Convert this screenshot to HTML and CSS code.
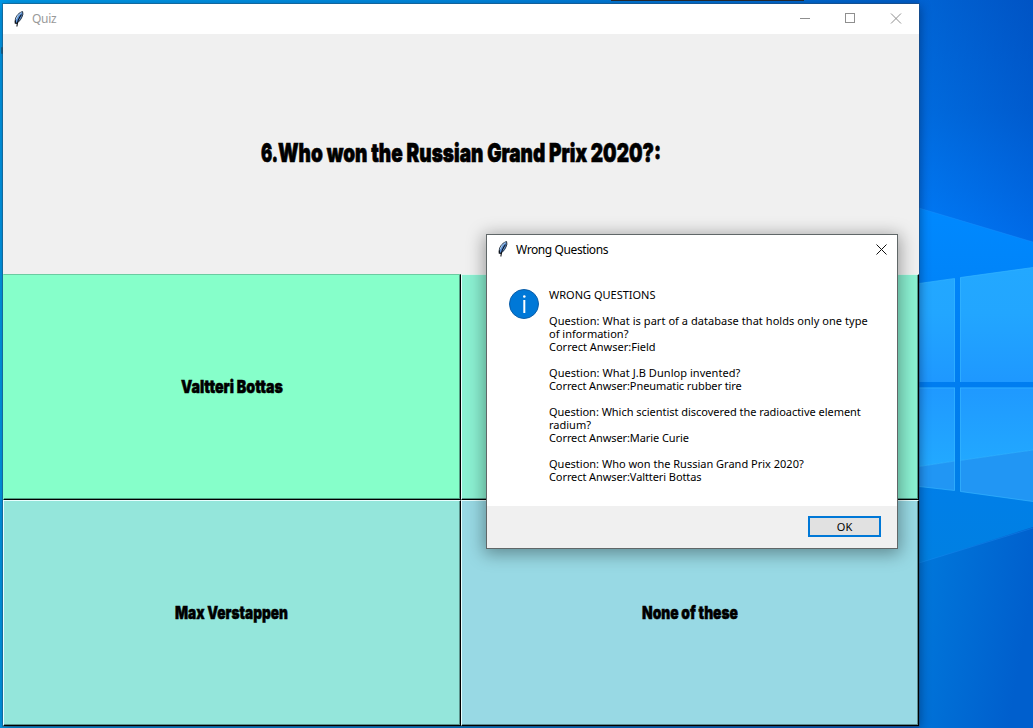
FILE: index.html
```html
<!DOCTYPE html>
<html lang="en">
<head>
<meta charset="utf-8">
<title>Quiz</title>
<link rel="stylesheet" href="styles.css">
</head>
<body>
<svg width="0" height="0" class="defs" aria-hidden="true">
  <symbol id="feather" viewBox="0 0 10 16">
    <path d="M8.6.6C5.500 1.200 2 4.800 1.400 8.400L1.300 11.500 2.500 12.200C5.500 11 8 7 8.900 3.200Z" fill="#5b93dc" stroke="#26323f" stroke-width="1"/>
    <path d="M7.400 1.500C5 3 3 5.500 2.300 8" fill="none" stroke="#b8d0e4" stroke-width="1"/>
    <path d="M7.500 3.500C5.500 6 3.300 10 2.900 15.500M1.300 9.500V12.300H4" fill="none" stroke="#0b0f16" stroke-width="1.100"/>
  </symbol>
</svg>
<div class="desktop">
  <svg class="wallpaper" width="1033" height="728" aria-hidden="true">
    <defs>
      <linearGradient id="base" x1="0" x2="1" y1="0" y2="0"><stop offset="0" stop-color="#009be9"/><stop offset=".45" stop-color="#0088df"/><stop offset=".7" stop-color="#006fd3"/><stop offset="1" stop-color="#0055c5"/></linearGradient>
      <linearGradient id="sky" x1="0" x2="0" y1="0" y2="1"><stop offset="0" stop-color="#005acb"/><stop offset=".45" stop-color="#0063d8"/><stop offset="1" stop-color="#007aff"/></linearGradient>
      <linearGradient id="shade" x1="0" x2="1" y1=".2" y2="0"><stop offset="0" stop-color="#0078e8" stop-opacity=".35"/><stop offset="1" stop-color="#0048b8" stop-opacity=".35"/></linearGradient>
      <linearGradient id="beam" x1="0" x2="0" y1="0" y2="1"><stop offset="0" stop-color="#0089ff"/><stop offset=".5" stop-color="#007df0"/><stop offset="1" stop-color="#0080e2"/></linearGradient>
      <linearGradient id="floor" x1="0" x2="1" y1="0" y2=".3"><stop offset="0" stop-color="#0079dc"/><stop offset="1" stop-color="#005fcd"/></linearGradient>
      <linearGradient id="paneTop" x1="0" x2="0" y1="0" y2="1"><stop offset="0" stop-color="#23a8ff"/><stop offset=".4" stop-color="#22a6ff"/><stop offset="1" stop-color="#1e98ff"/></linearGradient>
      <linearGradient id="paneLow" x1="0" x2="0" y1="0" y2="1"><stop offset="0" stop-color="#1f99ff"/><stop offset="1" stop-color="#22a9ff"/></linearGradient>
    </defs>
    <rect width="1033" height="728" fill="url(#base)"/>
    <rect x="919" width="114" height="250" fill="url(#sky)"/>
    <rect x="919" width="114" height="250" fill="url(#shade)"/>
    <path d="M919 560 1033 526V728H919Z" fill="url(#floor)"/>
    <path d="M919 208 1033 242V527L919 563Z" fill="url(#beam)"/>
    <path d="M919 208 1033 242M919 563 1033 528" stroke="#2599ff" stroke-opacity=".3"/>
    <path d="M919 283.500 955 278.500V382H919ZM960 277.500 1033 267.500V382H960Z" fill="url(#paneTop)"/>
    <path d="M919 387.500H955V461L919 466.500ZM960 387.500H1033V450L960 460.500Z" fill="url(#paneLow)"/>
    <path d="M919 466.500 955 461V490.500L919 486.500ZM960 460.500 1033 450V501.500L960 491.500Z" fill="#2196f4"/>
    <path d="M919 283.500 954.500 278.500V382M960.500 382V277.500L1033 267.500M954.500 388V490.500L919 486.500M960.500 388V491.500L1033 501.500M919 466.500 955 461M960 460.500 1033 450M919 388H955M960 388H1033" fill="none" stroke="#36b6ff" stroke-opacity=".65"/>
    <rect x="611" width="193" height="1" fill="#252a30"/>
    <rect x="1" y="47" width="2" height="7" rx="1" fill="#1a668f"/>
  </svg>

  <main class="window">
    <header class="titlebar">
      <svg class="feather" width="10" height="16"><use href="#feather"/></svg>
      <span class="title">Quiz</span>
      <svg class="controls" width="101" height="11" fill="none" stroke="#8f8f8f"><path d="M0 5.500H10M91 .5 101 10.500M101 .5 91 10.500"/><rect x="45.500" y=".5" width="9" height="9"/></svg>
    </header>
    <section class="question">
      <svg width="410" height="40"><text class="heading" y="28"><tspan x="5" textLength="17" lengthAdjust="spacingAndGlyphs">6.</tspan><tspan x="22" textLength="383" lengthAdjust="spacingAndGlyphs">Who won the Russian Grand Prix 2020?:</tspan></text></svg>
    </section>
    <section class="answers">
      <button class="answer mint"><svg width="112" height="28"><text x="5" y="20" textLength="102" lengthAdjust="spacingAndGlyphs">Valtteri Bottas</text></svg></button>
      <button class="answer aqua"></button>
      <button class="answer teal"><svg width="124" height="28"><text x="5" y="20" textLength="113" lengthAdjust="spacingAndGlyphs">Max Verstappen</text></svg></button>
      <button class="answer sky"><svg width="106" height="28"><text x="5" y="20" textLength="96" lengthAdjust="spacingAndGlyphs">None of these</text></svg></button>
    </section>
  </main>

  <div class="dialog" role="dialog">
    <header class="dialog-bar">
      <svg class="feather" width="10" height="16"><use href="#feather"/></svg>
      <span class="dialog-title">Wrong Questions</span>
      <svg class="close" width="11" height="11" fill="none" stroke="#111"><path d="M.5.5 10.500 10.500M10.500.5.5 10.500"/></svg>
    </header>
    <div class="dialog-body">
      <svg class="info" width="30" height="30"><circle cx="15" cy="15" r="14.500" fill="#0078d7" stroke="#0c5ea8"/><circle cx="15.300" cy="7.500" r="1.300" fill="#fff"/><path d="M15.300 11V24" stroke="#fff" stroke-width="2"/></svg>
      <div class="message">
        <p>WRONG QUESTIONS</p>
        <p><span class="wide">Question: What is part of a database that holds only one type</span><br>of information?<br>Correct Anwser:Field</p>
        <p><span class="wide">Question: What J.B Dunlop invented?</span><br><span class="tight">Correct Anwser:Pneumatic rubber tire</span></p>
        <p><span class="snug">Question: Which scientist discovered the radioactive element</span><br>radium?<br><span class="tight">Correct Anwser:Marie Curie</span></p>
        <p>Question: Who won the Russian Grand Prix 2020?<br><span class="tight">Correct Anwser:Valtteri Bottas</span></p>
      </div>
    </div>
    <footer class="dialog-footer"><button class="ok">OK</button></footer>
  </div>
</div>
</body>
</html>
```
FILE: styles.css
```css
* { box-sizing: border-box; }
body { margin: 0; overflow: hidden; font-family: "Noto Sans", "Open Sans", sans-serif; }
svg { display: block; flex: none; overflow: visible; }
button { font: inherit; margin: 0; padding: 0; }
.defs { position: absolute; }
.desktop { position: relative; width: 1033px; height: 728px; overflow: hidden; }
.wallpaper { position: absolute; inset: 0; }

.window {
  position: absolute; left: 3px; top: 4px; width: 916px; height: 722px;
  display: flex; flex-direction: column; background: #f0f0f0;
  box-shadow: 0 0 0 1px rgba(50, 70, 90, .4), 1px 2px 10px rgba(0, 15, 50, .45);
}
.titlebar { height: 30px; display: flex; align-items: center; padding: 0 18px 2px 11px; background: #fff; }
.titlebar .feather { margin-top: 1px; }
.title { margin-left: 8px; font-size: 12px; letter-spacing: -.3px; color: #999; }
.controls { margin: 1px 0 0 auto; }
.question { height: 240px; display: flex; align-items: center; justify-content: center; }
.answers { display: grid; grid-template: 226px 226px / 458px 458px; }
.answer {
  display: flex; align-items: center; justify-content: center;
  border: 1px solid #000; border-top-color: #e8ffff; border-left-color: #e8ffff;
  box-shadow: inset -1px -1px 0 rgba(30, 60, 60, .5);
}
.mint { background: #86ffca; border-top-color: #6bcba1; border-left-color: #86ffca; }
.aqua { background: #8bf1d2; border-top-color: #e3f5ef; }
.teal { background: #94e6db; }
.sky { background: #98d9e4; }

.answer text, .heading {
  font-family: Impact, Inter, Roboto, sans-serif; font-weight: 900;
  fill: #000; stroke: #000; stroke-width: .5px;
}
.answer text { font-size: 18px; }
.heading { font-size: 26px; stroke-width: .7px; }

.dialog {
  position: absolute; left: 486px; top: 234px; width: 412px; height: 315px;
  display: flex; flex-direction: column; background: #fff; border: 1px solid #606768;
  box-shadow: 0 3px 16px 2px rgba(0, 0, 0, .36); color: #000;
}
.dialog-bar { height: 30px; display: flex; align-items: center; padding: 0 10px 2px 11px; }
.dialog-title { margin-left: 8px; font-size: 12px; letter-spacing: -.4px; }
.close { margin-left: auto; }
.dialog-body { flex: 1; display: flex; padding: 24px 0 0 22px; }
.message { margin: -1px 0 0 10px; font-size: 11px; line-height: 13px; white-space: nowrap; }
.message p { margin: 0 0 13px; }
.wide { letter-spacing: .05px; }
.tight { letter-spacing: -.09px; }
.snug { letter-spacing: -.03px; }
.dialog-footer { height: 42px; display: flex; justify-content: flex-end; padding: 10px 16px 0 0; background: #f0f0f0; }
.ok { width: 73px; height: 21px; border: 2px solid #0078d7; background: #e1e1e1; font-size: 11px; line-height: 17px; color: #000; }
```
